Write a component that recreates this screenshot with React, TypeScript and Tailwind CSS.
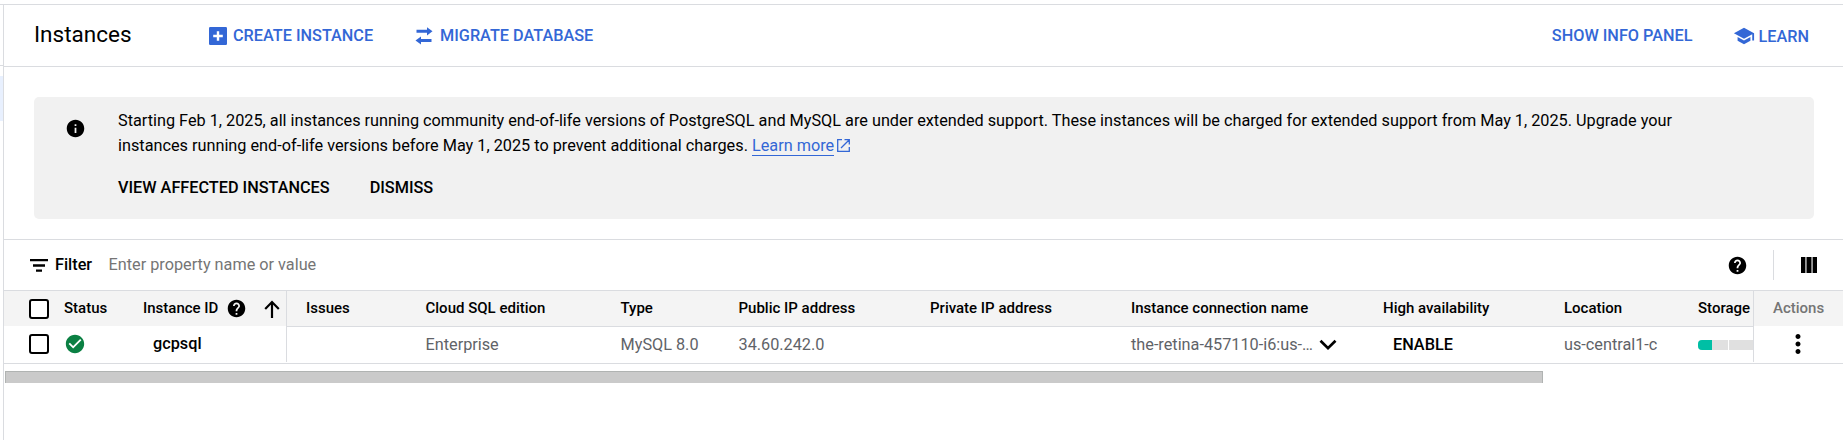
import React from "react";
import { MdCheckCircle, MdHelp, MdInfo, MdMoreVert, MdSchool } from "react-icons/md";

function AddBoxIcon() {
  return (
    <svg viewBox="0 0 18 18" className="size-[18px] shrink-0">
      <rect width="18" height="18" rx="1.2" fill="currentColor" />
      <path d="M9 4.2v9.6M4.2 9h9.6" stroke="#fff" strokeWidth="2.4" />
    </svg>
  );
}

function MigrateIcon() {
  return (
    <svg viewBox="0 0 18 18" className="size-[18px] shrink-0" fill="currentColor">
      <path d="M1.5 2.8h10.5V.2l5.500 4.100L12 8.400V5.800H1.500zM16.500 12H6V9.400L.5 13.500 6 17.600V15h10.500z" />
    </svg>
  );
}

function OpenInNewIcon() {
  return (
    <svg viewBox="0 0 13 13" className="ml-[3px] inline size-[13px] align-[-1px] text-[#3367d6]" fill="none" stroke="currentColor" strokeWidth="1.3">
      <path d="M5 .7H.7v11.600h11.600V8M7.500 .7h4.800v4.800M12.300 .7L4 9" />
    </svg>
  );
}

function FilterIcon() {
  return (
    <svg viewBox="0 0 18 13" className="h-[13px] w-[18px] shrink-0" fill="none" stroke="currentColor" strokeWidth="2.3">
      <path d="M0 1.200h18M3 6.500h12M6 11.700h6" />
    </svg>
  );
}

function ArrowUpIcon() {
  return (
    <svg viewBox="0 0 16 18" className="h-[18px] w-4 shrink-0" fill="none" stroke="currentColor" strokeWidth="2.2">
      <path d="M8 18V2M1.200 9L8 2.100 14.800 9" />
    </svg>
  );
}

function ChevronDownIcon() {
  return (
    <svg viewBox="0 0 18 12" className="ml-[7px] h-3 w-[18px] shrink-0 text-black" fill="none" stroke="currentColor" strokeWidth="2.700">
      <path d="M1.500 1.700L9 9.200l7.500-7.500" />
    </svg>
  );
}

function ColumnsIcon() {
  return (
    <svg viewBox="0 0 16 16" className="size-4" fill="currentColor">
      <path d="M0 0h4.400v16H0zM5.500 0h5v16h-5zM11.600 0H16v16h-4.400z" />
    </svg>
  );
}

const columns = [
  { title: "Issues", value: "", cell: "w-[119.5px]" },
  { title: "Cloud SQL edition", value: "Enterprise", cell: "w-[195px]" },
  { title: "Type", value: "MySQL 8.0", cell: "w-[118px]" },
  { title: "Public IP address", value: "34.60.242.0", cell: "w-[191.5px]" },
  { title: "Private IP address", value: "", cell: "w-[201px]" },
];

function Checkbox() {
  return <span className="size-5 shrink-0 rounded-[3px] border-2 border-black bg-white" />;
}

export default function App() {
  return (
    <div className="flex h-[440px] w-[1843px] flex-col overflow-hidden bg-white pt-1 font-[Roboto,sans-serif] text-[16.25px] text-black">
      <div className="flex min-h-0 flex-1 border-t border-[#dadce0]">
        <div className="w-[3px] shrink-0 pt-[60px]">
          <div className="h-px bg-[#dadce0]" />
          <div className="mt-[10px] h-[45px] bg-[#e8f0fe]" />
        </div>
        <main className="flex w-[1840px] flex-col border-l border-[#dadce0]">
          <header className="flex h-[62px] shrink-0 items-center border-b border-[#dadce0] pl-[30px] pr-[34px] font-medium text-[#3367d6]">
            <h1 className="w-[175px] pb-[2px] text-[22.5px] font-normal text-black">Instances</h1>
            <button className="flex w-[206px] items-center whitespace-nowrap">
              <AddBoxIcon />
              <span className="ml-[6px] pt-[1px]">CREATE INSTANCE</span>
            </button>
            <button className="flex items-center whitespace-nowrap">
              <MigrateIcon />
              <span className="ml-[7px] pt-[1px]">MIGRATE DATABASE</span>
            </button>
            <button className="ml-auto whitespace-nowrap pt-[1px]">SHOW INFO PANEL</button>
            <button className="ml-[40px] flex items-center">
              <MdSchool className="mr-[4px] size-[22px]" />
              <span className="pt-[3px]">LEARN</span>
            </button>
          </header>

          <section className="ml-[30px] mt-[30px] flex h-[122px] w-[1780px] shrink-0 rounded-[5px] bg-[#f1f1f1]">
            <MdInfo className="ml-[31px] mt-[21px] size-[21px] shrink-0" />
            <div className="ml-[32px] pt-[11px]">
              <p className="whitespace-nowrap leading-[25px]">
                Starting Feb 1, 2025, all instances running community end-of-life versions of PostgreSQL and MySQL are under extended support. These instances will be charged for extended support from May 1, 2025. Upgrade your
                <br />
                instances running end-of-life versions before May 1, 2025 to prevent additional charges.{" "}
                <a className="border-b border-[#3367d6] text-[#3367d6]">Learn more</a>
                <OpenInNewIcon />
              </p>
              <div className="mt-[20px] flex gap-10 font-medium leading-[20px]">
                <button>VIEW AFFECTED INSTANCES</button>
                <button>DISMISS</button>
              </div>
            </div>
          </section>

          <div className="mt-[20px] flex h-[52px] shrink-0 items-center border-y border-[#dadce0] pl-[26px] pr-[26px]">
            <FilterIcon />
            <span className="ml-[7px] w-[53.5px] font-medium">Filter</span>
            <span className="text-[#757575]">Enter property name or value</span>
            <MdHelp className="ml-auto size-[21px]" />
            <div className="ml-[25px] mr-[27px] h-[30px] w-px bg-[#dadce0]" />
            <ColumnsIcon />
          </div>

          <div className="flex h-[73px] shrink-0 border-b border-[#dadce0]">
            <div className="flex w-[283px] shrink-0 flex-col">
              <div className="flex h-[35px] items-center border-r border-[#dadce0] bg-[#f4f4f4] pl-[25px] text-[15px] font-medium">
                <Checkbox />
                <span className="ml-[15px] w-[79px]">Status</span>
                Instance ID
                <MdHelp className="ml-[8px] size-[21px]" />
                <span className="ml-[17px]"><ArrowUpIcon /></span>
              </div>
              <div className="flex h-[36px] items-center border-r border-[#dadce0] pl-[25px] font-medium">
                <Checkbox />
                <MdCheckCircle className="ml-[15px] size-[22px] text-[#0b8043]" />
                <span className="ml-[67px]">gcpsql</span>
              </div>
            </div>
            <div className="flex w-[1466px] shrink-0 flex-col overflow-hidden">
              <div className="flex h-[36px] shrink-0 items-center whitespace-nowrap border-b border-[#dadce0] bg-[#f4f4f4] pl-[19px] text-[15px] font-medium">
                {columns.map((c) => (
                  <span key={c.title} className={`${c.cell} shrink-0`}>{c.title}</span>
                ))}
                <span className="w-[252px] shrink-0">Instance connection name</span>
                <span className="w-[181px] shrink-0">High availability</span>
                <span className="w-[134px] shrink-0">Location</span>
                <span>Storage</span>
              </div>
              <div className="flex h-[36px] shrink-0 items-center whitespace-nowrap pl-[19px] text-[#5f6368]">
                {columns.map((c) => (
                  <span key={c.title} className={`${c.cell} shrink-0`}>{c.value}</span>
                ))}
                <span className="flex w-[262px] shrink-0 items-center">
                  <span className="w-[181px]">the-retina-457110-i6:us-…</span>
                  <ChevronDownIcon />
                </span>
                <span className="w-[171px] shrink-0 font-medium text-black">ENABLE</span>
                <span className="w-[134px] shrink-0">us-central1-c</span>
                <span className="flex h-[10px] shrink-0 gap-px">
                  <span className="flex w-[30px] overflow-hidden rounded-l-[4px] bg-[#e0e0e0]">
                    <span className="w-[14px] bg-[#00bfa5]" />
                  </span>
                  <span className="w-[30px] bg-[#e0e0e0]" />
                </span>
              </div>
            </div>
            <div className="flex w-[90px] shrink-0 flex-col">
              <div className="flex h-[35px] items-center border-l border-[#dadce0] bg-[#f4f4f4] pl-[19px] text-[15px] font-medium text-[#757575]">Actions</div>
              <div className="flex h-[36px] items-center border-l border-[#dadce0] pl-[29px]">
                <MdMoreVert className="size-[30px]" />
              </div>
            </div>
          </div>

          <div className="ml-px mt-[7px] h-[12px] w-[1538px] shrink-0 border border-b-0 border-[#b0b3b2] bg-[#cacaca]" />
        </main>
      </div>
    </div>
  );
}
